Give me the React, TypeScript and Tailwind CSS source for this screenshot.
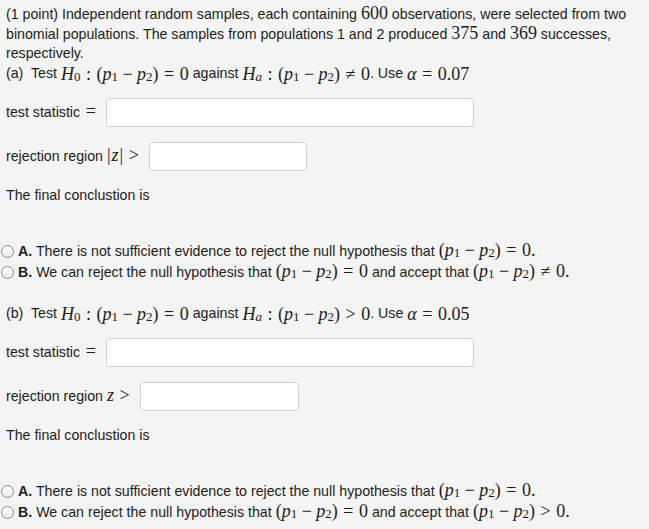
import React from 'react';

const M: React.FC<{ children: React.ReactNode }> = ({ children }) => (
  <span className="font-['Liberation_Serif',serif] text-[18px] leading-none">{children}</span>
);

const I: React.FC<{ children: React.ReactNode }> = ({ children }) => <i>{children}</i>;

const Sub: React.FC<{ children: React.ReactNode; italic?: boolean }> = ({ children, italic }) => (
  <sub className={`text-[13px] leading-none relative top-[1px] ${italic ? 'italic' : ''}`}>{children}</sub>
);

// relation (=, ≠, >, :) gets a thick space, binary minus a medium one
const Rel: React.FC<{ children: React.ReactNode }> = ({ children }) => (
  <span className="mx-[5.5px]">{children}</span>
);
const Bin: React.FC<{ children: React.ReactNode }> = ({ children }) => (
  <span className="mx-[4.5px]">{children}</span>
);

const Diff = () => (
  <>
    (<I>p</I>
    <Sub>1</Sub>
    <Bin>−</Bin>
    <I>p</I>
    <Sub>2</Sub>)
  </>
);

const Hyp: React.FC<{ label: string; rel: string; alpha: string }> = ({ label, rel, alpha }) => (
  <div className="h-[22px] flex items-center pl-[6px] whitespace-pre">
    <span>{label}  Test </span>
    <M>
      <I>H</I>
      <Sub>0</Sub>
      <Rel>:</Rel>
      <Diff />
      <Rel>=</Rel>0
    </M>
    <span> against </span>
    <M>
      <I>H</I>
      <Sub italic>a</Sub>
      <Rel>:</Rel>
      <Diff />
      <Rel>{rel}</Rel>0
    </M>
    <span>. Use </span>
    <M>
      <I>α</I>
      <Rel>=</Rel>
      {alpha}
    </M>
  </div>
);

const InputRow: React.FC<{ label: React.ReactNode; width: string; className?: string }> = ({
  label,
  width,
  className = '',
}) => (
  <div className={`flex items-center pl-[6px] ${className}`}>
    <span className="whitespace-pre">{label}</span>
    <input
      type="text"
      className={`${width} h-[29px] ml-[5px] bg-white border border-[#cfcfcf] rounded-[4px] outline-none`}
    />
  </div>
);

const Radio: React.FC<{ letter: string; children: React.ReactNode }> = ({ letter, children }) => (
  <div className="h-[21px] flex items-center pl-[1px] whitespace-pre">
    <span className="w-[13px] h-[13px] rounded-full border border-[#8a8a8a] bg-gradient-to-b from-white to-[#ececec] mr-[4px] shrink-0" />
    <b>{letter}.</b>
    <span> {children}</span>
  </div>
);

const Options: React.FC<{ rel: string }> = ({ rel }) => (
  <div className="mt-[36px]">
    <Radio letter="A">
      There is not sufficient evidence to reject the null hypothesis that{' '}
      <M>
        <Diff />
        <Rel>=</Rel>0.
      </M>
    </Radio>
    <Radio letter="B">
      We can reject the null hypothesis that{' '}
      <M>
        <Diff />
        <Rel>=</Rel>0
      </M>{' '}
      and accept that{' '}
      <M>
        <Diff />
        <Rel>{rel}</Rel>0.
      </M>
    </Radio>
  </div>
);

export default function App() {
  return (
    <div className="w-[649px] h-[529px] bg-[#f4f4f4] text-[#1c1c1c] text-[14.2px] font-['Liberation_Sans',Arial,sans-serif] pt-[4px] overflow-hidden">
      <p className="leading-[19px] pl-[6px] pr-[10px]">
        (1 point) Independent random samples, each containing <M>600</M> observations, were selected from two
        binomial populations. The samples from populations 1 and 2 produced <M>375</M> and <M>369</M> successes,
        respectively.
      </p>
      <Hyp label="(a)" rel="≠" alpha="0.07" />
      <InputRow
        label={
          <>
            test statistic
            <M>
              <Rel>=</Rel>
            </M>
          </>
        }
        width="w-[368px]"
        className="mt-[13px]"
      />
      <InputRow
        label={
          <>
            rejection region{' '}
            <M>
              |<span className="italic mx-[1px]">z</span>|<Rel>{'>'}</Rel>
            </M>
          </>
        }
        width="w-[158px]"
        className="mt-[15px]"
      />
      <p className="leading-[19px] pl-[6px] mt-[15px]">The final conclustion is</p>
      <Options rel="≠" />

      <div className="mt-[20px]">
        <Hyp label="(b)" rel=">" alpha="0.05" />
      </div>
      <InputRow
        label={
          <>
            test statistic
            <M>
              <Rel>=</Rel>
            </M>
          </>
        }
        width="w-[368px]"
        className="mt-[13px]"
      />
      <InputRow
        label={
          <>
            rejection region{' '}
            <M>
              <I>z</I>
              <Rel>{'>'}</Rel>
            </M>
          </>
        }
        width="w-[159px]"
        className="mt-[15px]"
      />
      <p className="leading-[19px] pl-[6px] mt-[15px]">The final conclustion is</p>
      <Options rel=">" />
    </div>
  );
}
